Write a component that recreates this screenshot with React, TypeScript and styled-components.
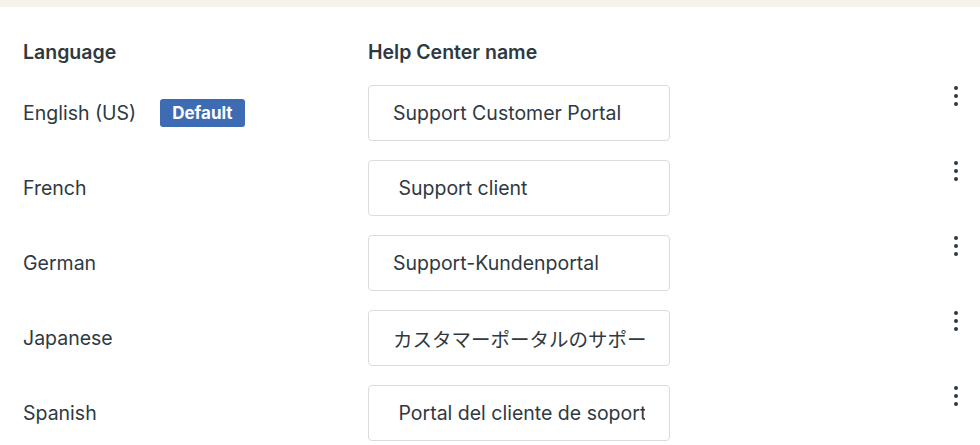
import React from "react";
import styled, { createGlobalStyle } from "styled-components";

interface LocaleRow {
  language: string;
  name: string;
  isDefault?: boolean;
}

const rows: LocaleRow[] = [
  { language: "English (US)", name: "Support Customer Portal", isDefault: true },
  { language: "French", name: " Support client" },
  { language: "German", name: "Support-Kundenportal" },
  { language: "Japanese", name: "カスタマーポータルのサポート" },
  { language: "Spanish", name: " Portal del cliente de soporte" },
];

const GlobalStyle = createGlobalStyle`
  body {
    margin: 0;
    background: #fff;
    font-family: Inter, "Noto Sans CJK JP", sans-serif;
    color: #2f3941;
  }
`;

const TopStrip = styled.div`
  height: 7px;
  background-color: #f6f2ea;
`;

const Table = styled.div`
  display: grid;
  grid-template-columns: 345px 302px 1fr;
  row-gap: 19px;
  padding: 33px 16px 0 23px;
`;

const HeaderCell = styled.div`
  font-size: 19.5px;
  font-weight: 600;
  line-height: 24px;
  margin-bottom: 2px;
`;

const LanguageCell = styled.div`
  display: flex;
  align-items: center;
  gap: 24px;
  font-size: 19.5px;
  line-height: 24px;
`;

const Badge = styled.span`
  display: inline-flex;
  align-items: center;
  height: 28px;
  padding: 0 12px;
  border-radius: 3px;
  background-color: #3d6cb4;
  color: #fff;
  font-size: 17px;
  font-weight: 700;
`;

const NameInput = styled.input`
  box-sizing: border-box;
  width: 302px;
  height: 56px;
  padding: 0 24px;
  border: 1px solid #d8dcde;
  border-radius: 4px;
  font-family: inherit;
  font-size: 19.5px;
  color: #2f3941;
  background: #fff;
  outline: none;
`;

const ActionCell = styled.div`
  display: flex;
  justify-content: flex-end;
  align-items: flex-start;
`;

const MenuButton = styled.button`
  display: flex;
  width: 16px;
  padding: 0;
  border: none;
  background: none;
  color: #2f3941;
  cursor: pointer;
`;

const KebabIcon = () => (
  <svg width="16" height="24" viewBox="0 0 16 24" fill="currentColor">
    <circle cx="8" cy="3" r="2" />
    <circle cx="8" cy="11" r="2" />
    <circle cx="8" cy="19" r="2" />
  </svg>
);

export default function App() {
  return (
    <>
      <GlobalStyle />
      <TopStrip />
      <Table>
        <HeaderCell>Language</HeaderCell>
        <HeaderCell>Help Center name</HeaderCell>
        <div />
        {rows.map((row) => (
          <React.Fragment key={row.language}>
            <LanguageCell>
              {row.language}
              {row.isDefault && <Badge>Default</Badge>}
            </LanguageCell>
            <NameInput defaultValue={row.name} />
            <ActionCell>
              <MenuButton aria-label="More options">
                <KebabIcon />
              </MenuButton>
            </ActionCell>
          </React.Fragment>
        ))}
      </Table>
    </>
  );
}
